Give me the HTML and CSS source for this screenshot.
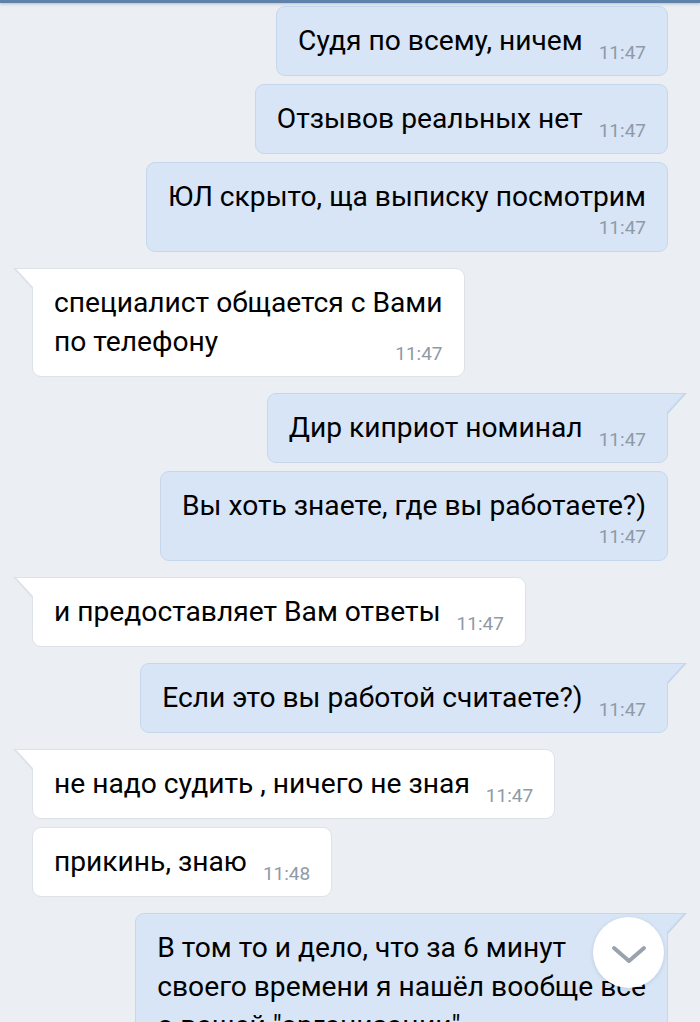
FILE: index.html
```html
<!DOCTYPE html>
<html lang="ru">
<head>
<meta charset="utf-8">
<title>Чат</title>
<link rel="stylesheet" href="styles.css">
</head>
<body>
<div class="topbar"></div>
<div class="chat">
  <div class="msg out"><span class="text">Судя по всему, ничем</span><span class="time">11:47</span></div>
  <div class="msg out"><span class="text">Отзывов реальных нет</span><span class="time">11:47</span></div>
  <div class="msg out below"><span class="text">ЮЛ скрыто, ща выписку посмотрим</span><span class="time">11:47</span></div>
  <div class="msg in first tail"><span class="text">специалист общается с Вами<br>по телефону</span><span class="time">11:47</span></div>
  <div class="msg out first tail"><span class="text">Дир киприот номинал</span><span class="time">11:47</span></div>
  <div class="msg out below"><span class="text">Вы хоть знаете, где вы работаете?)</span><span class="time">11:47</span></div>
  <div class="msg in first tail"><span class="text">и предоставляет Вам ответы</span><span class="time">11:47</span></div>
  <div class="msg out first tail"><span class="text">Если это вы работой считаете?)</span><span class="time">11:47</span></div>
  <div class="msg in first tail"><span class="text">не надо судить , ничего не зная</span><span class="time">11:47</span></div>
  <div class="msg in"><span class="text">прикинь, знаю</span><span class="time">11:48</span></div>
  <div class="msg out first tail wide"><span class="text">В том то и дело, что за 6 минут<br>своего времени я нашёл вообще всё<br>о вашей "организации"</span><span class="time">11:48</span></div>
</div>
<button class="scroll-down" aria-label="Вниз">
  <svg width="36" height="22" viewBox="0 0 36 22"><path d="M3 4 L18 17 L33 4" fill="none" stroke="#99a3ae" stroke-width="4" stroke-linecap="round" stroke-linejoin="round"/></svg>
</button>
</body>
</html>
```

FILE: styles.css
```css
html, body {
  margin: 0;
  padding: 0;
}
body {
  width: 700px;
  height: 1022px;
  overflow: hidden;
  background: #ebeef2;
  font-family: Roboto, "Noto Sans", "Liberation Sans", sans-serif;
  position: relative;
}
.topbar {
  position: absolute;
  top: 0;
  left: 0;
  right: 0;
  height: 3px;
  background: #5e82aa;
  box-shadow: 0 1px 3px rgba(60, 90, 130, 0.35);
  z-index: 3;
}
.chat {
  display: flex;
  flex-direction: column;
  padding-top: 6px;
}
.msg {
  position: relative;
  display: flow-root;
  box-sizing: border-box;
  max-width: 560px;
  padding: 14px 21px 15px 21px;
  border-radius: 9px;
  font-size: 28.2px;
  line-height: 39px;
  color: #000;
  margin-top: 8px;
}
.msg:first-child { margin-top: 0; }
.msg.first { margin-top: 16px; }
.msg.out {
  align-self: flex-end;
  margin-right: 32px;
  background: #d7e5f7;
  border: 1px solid #c7d7eb;
}
.msg.in {
  align-self: flex-start;
  margin-left: 32px;
  background: #ffffff;
  border: 1px solid #dde2e8;
}
.time {
  float: right;
  margin-left: 16px;
  margin-top: 24px;
  margin-bottom: -5px;
  font-size: 19px;
  line-height: 16px;
  color: #8f9aa7;
}
.msg.below .time {
  float: none;
  display: block;
  text-align: right;
  margin: 0;
  line-height: 20px;
  padding-top: 2px;
  margin-bottom: -2px;
}
.msg.wide .time { display: none; }
.msg.out.tail { border-top-right-radius: 0; }
.msg.in.tail { border-top-left-radius: 0; }
.msg.tail::before,
.msg.tail::after {
  content: "";
  position: absolute;
  top: -1px;
  width: 20px;
  height: 22px;
}
.msg.out.tail::before {
  right: -20px;
  background: #c7d7eb;
  clip-path: polygon(0 0, 100% 0, 0 100%);
}
.msg.out.tail::after {
  right: -18px;
  top: 0;
  background: #d7e5f7;
  clip-path: polygon(0 0, 93% 0, 0 92%);
}
.msg.in.tail::before {
  left: -20px;
  background: #dde2e8;
  clip-path: polygon(0 0, 100% 0, 100% 100%);
}
.msg.in.tail::after {
  left: -18px;
  top: 0;
  background: #ffffff;
  clip-path: polygon(7% 0, 100% 0, 100% 92%);
}
.scroll-down {
  position: absolute;
  left: 593px;
  top: 917px;
  width: 71px;
  height: 71px;
  border-radius: 50%;
  border: none;
  padding: 0;
  background: #ffffff;
  box-shadow: 0 1px 4px rgba(0, 0, 0, 0.12);
  display: flex;
  align-items: center;
  justify-content: center;
  z-index: 4;
}
.scroll-down svg { margin-top: 4px; }
```
